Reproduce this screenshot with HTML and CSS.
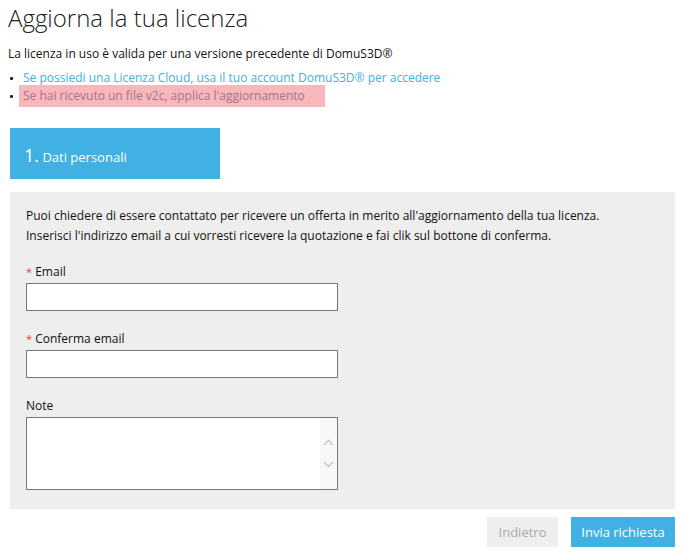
FILE: index.html
```html
<!DOCTYPE html>
<html lang="it">
<head>
    <meta charset="UTF-8">
    <meta name="viewport" content="width=device-width, initial-scale=1.0">
    <title>Aggiorna la tua licenza</title>
    <link rel="stylesheet" href="styles.css">
</head>
<body>
    <div class="intro">
        <h1>Aggiorna la tua licenza</h1>
        <p class="lead">La licenza in uso è valida per una versione precedente di DomuS3D®</p>
        <ul class="options">
            <li><a href="#">Se possiedi una Licenza Cloud, usa il tuo account DomuS3D® per accedere</a></li>
            <li class="highlight"><a href="#">Se hai ricevuto un file v2c, applica l'aggiornamento</a></li>
        </ul>
    </div>

    <div class="wizard">
        <div class="step-tab"><span class="step-num">1.</span> Dati personali</div>

        <div class="step-panel">
            <p class="info">
                Puoi chiedere di essere contattato per ricevere un offerta in merito all'aggiornamento della tua licenza.<br>
                Inserisci l'indirizzo email a cui vorresti ricevere la quotazione e fai clik sul bottone di conferma.
            </p>

            <div class="field">
                <label><span class="req">*</span> Email</label>
                <input type="text" class="text-input">
            </div>
            <div class="field">
                <label><span class="req">*</span> Conferma email</label>
                <input type="text" class="text-input">
            </div>
            <div class="field">
                <label>Note</label>
                <div class="note-box">
                    <textarea class="note-input"></textarea>
                    <div class="fake-scroll">
                        <svg width="11" height="7" viewBox="0 0 11 7"><path d="M1 6 L5.5 1.5 L10 6" fill="none" stroke="#c4c4c4" stroke-width="1.3"/></svg>
                        <svg width="11" height="7" viewBox="0 0 11 7"><path d="M1 1 L5.5 5.5 L10 1" fill="none" stroke="#c4c4c4" stroke-width="1.3"/></svg>
                    </div>
                </div>
            </div>
        </div>

        <div class="actions">
            <button class="btn btn-back">Indietro</button>
            <button class="btn btn-send">Invia richiesta</button>
        </div>
    </div>
</body>
</html>
```

FILE: styles.css
```css
body {
    margin: 0;
    font-family: "Open Sans", "Noto Sans", sans-serif;
    font-size: 12px;
    color: #111;
    background: #fff;
}

.intro {
    padding: 0 8px;
}

h1 {
    margin: 0;
    padding-top: 2px;
    font-size: 24px;
    font-weight: 300;
    line-height: 32px;
    color: #222;
}

.lead {
    margin: 10px 0 0;
    line-height: 19px;
}

.options {
    margin: 5px 0 0;
    padding: 0;
    list-style: none;
}

.options li {
    line-height: 19px;
    height: 19px;
    position: relative;
    padding-left: 15px;
}

.options li::before {
    content: "";
    position: absolute;
    left: 2px;
    top: 9px;
    width: 3px;
    height: 3px;
    border-radius: 1px;
    background: #222;
}

.options a {
    color: #41b0e2;
    text-decoration: none;
}

.options li.highlight {
    height: 22px;
    line-height: 22px;
    margin-top: -2px;
    padding-left: 11px;
}

.options li.highlight::before {
    top: 10px;
}

.options li.highlight a {
    display: block;
    background: #f8b7bb;
    color: #a4748f;
    padding-left: 4px;
    width: 302px;
}

/* wizard */
.wizard {
    margin: 21px 6px 0 10px;
}

.step-tab {
    width: 196px;
    height: 51px;
    padding-left: 14px;
    background: #41b0e2;
    color: #fff;
    font-size: 13px;
    line-height: 55px;
}

.step-num {
    font-size: 18px;
}

.step-panel {
    margin-top: 13px;
    background: #eeeeee;
    padding: 14px 16px 19px;
}

.info {
    margin: 0 0 16px;
    line-height: 20px;
}

.field {
    margin-top: 6px;
}

.field label {
    display: block;
    line-height: 20px;
    margin-bottom: 1px;
}

.req {
    color: #e8413c;
    font-size: 11px;
}

.text-input {
    display: block;
    box-sizing: border-box;
    width: 312px;
    height: 28px;
    margin: 0 0 18px;
    border: 1px solid #767676;
    background: #fff;
    font: inherit;
}

.note-box {
    display: flex;
    box-sizing: border-box;
    width: 312px;
    height: 73px;
    border: 1px solid #767676;
    background: #fff;
}

.note-input {
    flex: 1;
    border: none;
    resize: none;
    outline: none;
    font: inherit;
}

.fake-scroll {
    width: 17px;
    background: #f8f8f8;
    display: flex;
    flex-direction: column;
    align-items: center;
    justify-content: center;
    gap: 15px;
}

.actions {
    display: flex;
    justify-content: flex-end;
    gap: 13px;
    margin-top: 8px;
}

.btn {
    height: 30px;
    border: none;
    font-family: inherit;
    font-size: 13px;
    padding: 0;
    white-space: nowrap;
}

.btn-back {
    width: 71px;
    background: #eeeeee;
    color: #aaaaaa;
}

.btn-send {
    width: 104px;
    background: #41b0e2;
    color: #fff;
}
```
